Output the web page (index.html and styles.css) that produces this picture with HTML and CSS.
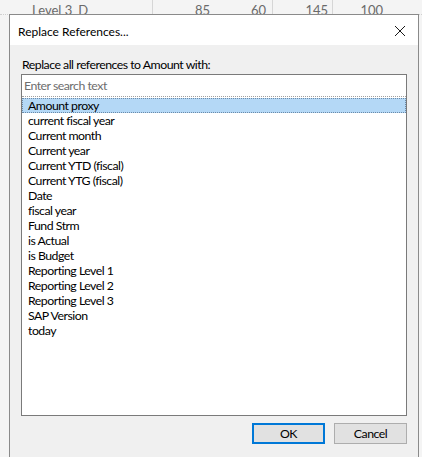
FILE: index.html
```html
<!DOCTYPE html>
<html>
<head>
<meta charset="utf-8">
<link rel="stylesheet" href="styles.css">
</head>
<body>
<div class="sheet">
  <div class="sheet-row">
    <div class="cell name">Level 3_D</div>
    <div class="cell num c1">85</div>
    <div class="cell num c2">60</div>
    <div class="cell num c3">145</div>
    <div class="cell num c4">100</div>
  </div>
</div>

<div class="dialog">
  <div class="titlebar">
    <span class="title">Replace References...</span>
    <svg class="close" width="12" height="12" viewBox="0 0 12 12"><path d="M1 1 L11 11 M11 1 L1 11" stroke="#1a1a1a" stroke-width="1" fill="none"/></svg>
  </div>
  <div class="body">
    <div class="label">Replace all references to Amount with:</div>
    <div class="listbox">
      <div class="search">Enter search text</div>
      <div class="items">
        <div class="item selected">Amount proxy</div>
        <div class="item">current fiscal year</div>
        <div class="item">Current month</div>
        <div class="item">Current year</div>
        <div class="item">Current YTD (fiscal)</div>
        <div class="item">Current YTG (fiscal)</div>
        <div class="item">Date</div>
        <div class="item">fiscal year</div>
        <div class="item">Fund Strm</div>
        <div class="item">is Actual</div>
        <div class="item">is Budget</div>
        <div class="item">Reporting Level 1</div>
        <div class="item">Reporting Level 2</div>
        <div class="item">Reporting Level 3</div>
        <div class="item">SAP Version</div>
        <div class="item">today</div>
      </div>
    </div>
    <div class="buttons">
      <div class="btn ok">OK</div>
      <div class="btn cancel">Cancel</div>
    </div>
  </div>
</div>
</body>
</html>
```

FILE: styles.css
```css
html, body {
  margin: 0;
  padding: 0;
}
body {
  width: 422px;
  height: 457px;
  overflow: hidden;
  background: #f3f3f3;
  font-family: "Segoe UI", Lato, "Noto Sans", sans-serif;
  font-size: 12.3px;
  letter-spacing: -0.5px;
  color: #000;
  position: relative;
}
.sheet {
  height: 457px;
  background: #f4f4f4;
}
.sheet-row {
  display: flex;
  height: 14px;
  border-bottom: 1px dotted #d0d0d0;
  color: #6a6a6a;
  font-size: 13px;
  line-height: 13px;
  letter-spacing: 0;
  overflow: hidden;
}
.cell {
  box-sizing: border-box;
  padding-top: 4px;
}
.name {
  width: 153px;
  padding-left: 32px;
  border-right: 1px solid #d6d6d6;
}
.num { text-align: right; }
.c1 { width: 57px; padding-right: 0; }
.c2 { width: 63px; padding-right: 6px; border-right: 1px solid #d6d6d6; }
.c3 { width: 60px; padding-right: 4px; border-right: 1px solid #d6d6d6; }
.c4 { width: 56px; padding-right: 6px; }

.dialog {
  position: absolute;
  left: 9px;
  top: 14px;
  width: 408px;
  height: 460px;
  border: 1px solid #8a8a8a;
  background: #f0f0f0;
  display: flex;
  flex-direction: column;
}
.titlebar {
  height: 30px;
  background: #ffffff;
  display: flex;
  align-items: center;
  justify-content: space-between;
  padding: 0 9px 0 8px;
}
.title {
  color: #000;
  padding-top: 2px;
  font-size: 12px;
  letter-spacing: 0;
}
.close {
  margin-right: 3px;
  margin-top: 1px;
}
.body {
  padding: 11px 0 0 11px;
}
.label {
  height: 18px;
  line-height: 18px;
  padding-left: 1px;
}
.listbox {
  width: 384px;
  height: 340px;
  border: 1px solid #7a7a7a;
  background: #fff;
  display: flex;
  flex-direction: column;
}
.search {
  height: 21px;
  line-height: 22px;
  padding-left: 2px;
  color: #6d6d6d;
  border-bottom: 1px dotted #a0a0a0;
  margin-bottom: 1px;
}
.items {
  display: flex;
  flex-direction: column;
}
.item {
  height: 15px;
  line-height: 15px;
  padding-left: 6px;
  white-space: nowrap;
}
.item.selected {
  background: #b4d8f6;
  outline: 1px dotted #6b8aa8;
  outline-offset: -1px;
}
.buttons {
  display: flex;
  justify-content: flex-end;
  gap: 9px;
  margin-top: 7px;
  width: 386px;
}
.btn {
  box-sizing: border-box;
  height: 21px;
  display: flex;
  align-items: center;
  justify-content: center;
  background: #e1e1e1;
  border: 1px solid #adadad;
}
.ok {
  width: 73px;
  border: 2px solid #0078d7;
}
.cancel {
  width: 73px;
}
```
